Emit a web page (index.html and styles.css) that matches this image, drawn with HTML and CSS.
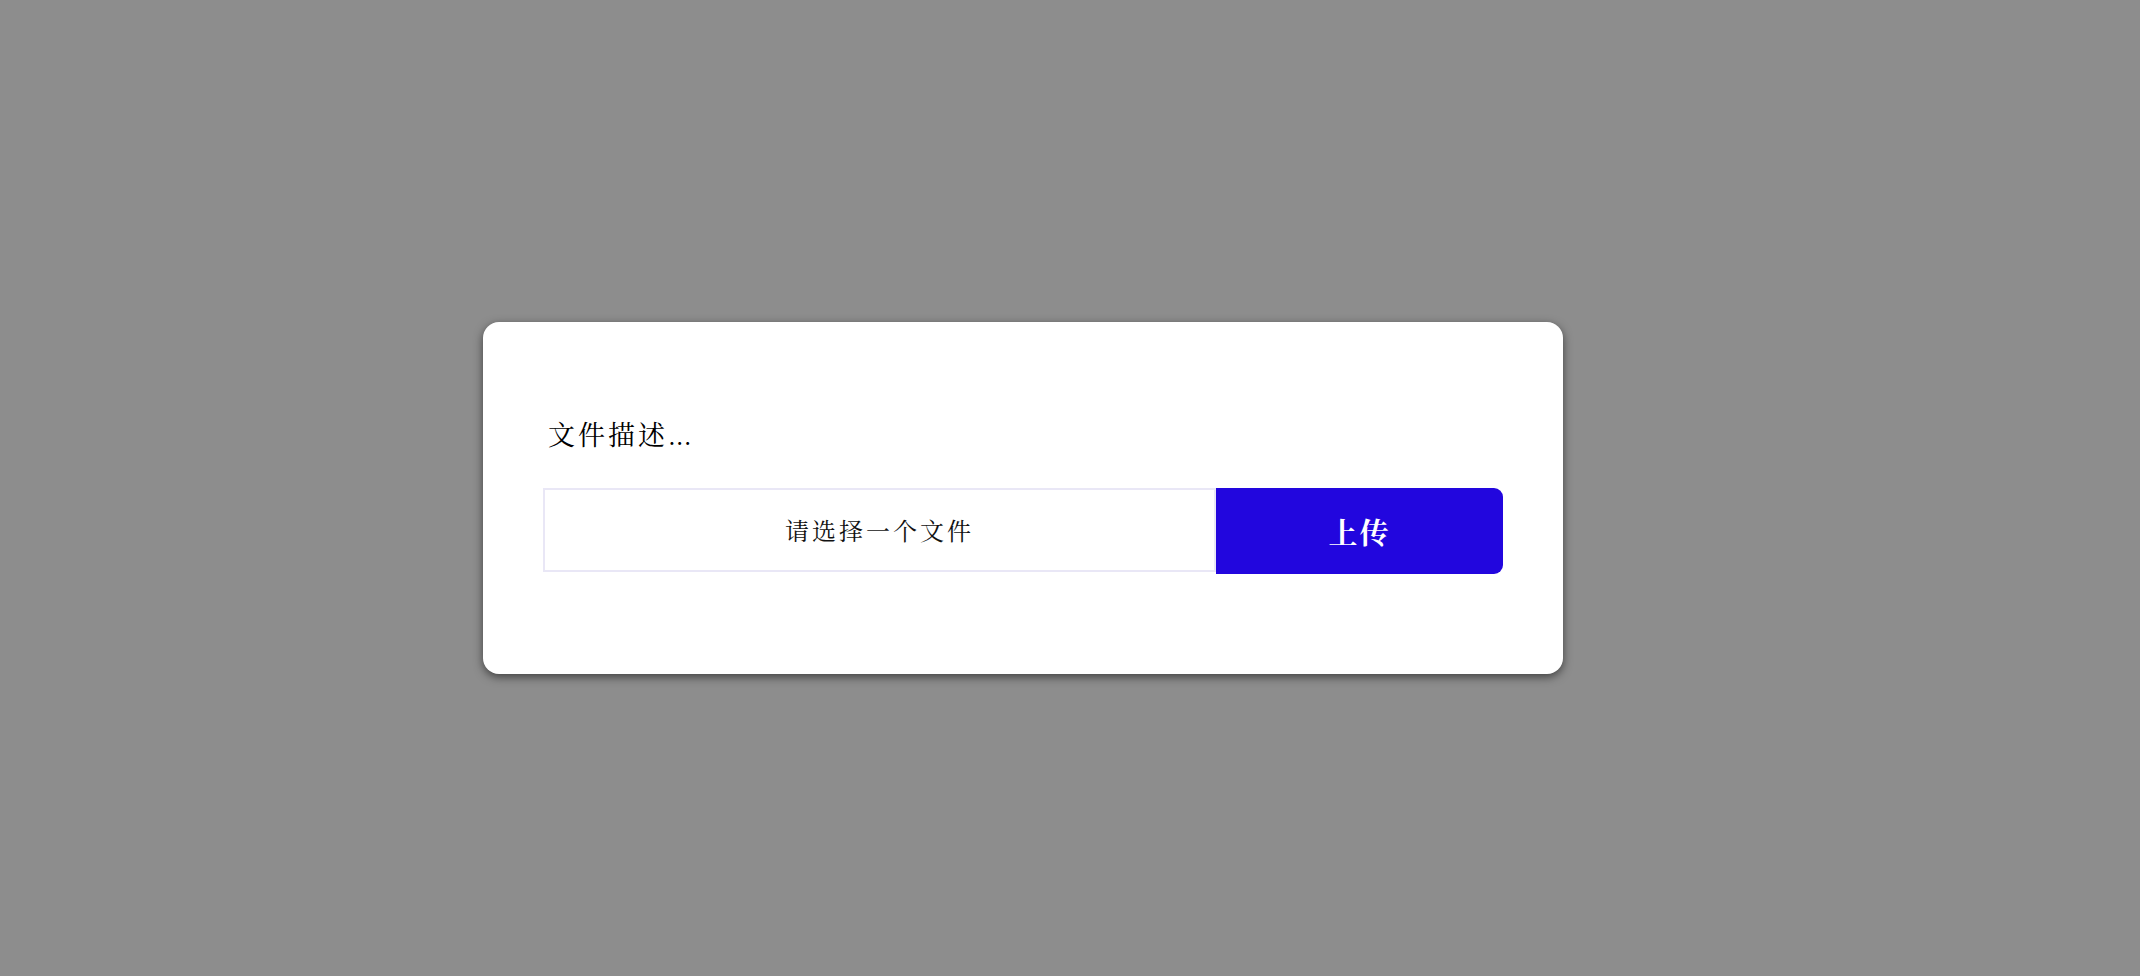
FILE: index.html
```html
<!DOCTYPE html>
<html lang="zh-CN">
<head>
<meta charset="utf-8">
<title>上传文件</title>
<link rel="stylesheet" href="styles.css">
</head>
<body>
<div class="stage">
  <form class="card">
    <div class="label">文件描述<span class="dots">...</span></div>
    <div class="row">
      <div class="file">请选择一个文件</div>
      <button type="button" class="upload">上传</button>
    </div>
  </form>
</div>
</body>
</html>
```

FILE: styles.css
```css
html, body {
  margin: 0;
  padding: 0;
  background: #8d8d8d;
}
body {
  font-family: "AR PL UKai CN", "KaiTi", "STKaiti", "Noto Serif CJK SC", "Noto Sans CJK SC", serif;
}
.stage {
  height: 976px;
  box-sizing: border-box;
  display: flex;
  justify-content: center;
  align-items: center;
  padding-right: 94px;
  padding-top: 20px;
}
.card {
  width: 1080px;
  height: 352px;
  box-sizing: border-box;
  padding: 94px 60px 100px;
  background: #fff;
  border-radius: 16px;
  box-shadow: 0 3px 10px rgba(0, 0, 0, 0.55);
  display: flex;
  flex-direction: column;
}
.label {
  font-size: 27px;
  line-height: 36px;
  height: 36px;
  letter-spacing: 3px;
  color: #000;
  padding-left: 5px;
  margin-bottom: 36px;
  flex: none;
}
.dots {
  letter-spacing: 0;
  font-size: 24px;
  line-height: 1;
}
.row {
  display: flex;
  align-items: flex-start;
  flex: none;
}
.file {
  width: 673px;
  height: 84px;
  box-sizing: border-box;
  border: 2px solid #e9e7f6;
  display: flex;
  align-items: center;
  justify-content: center;
  font-size: 24px;
  letter-spacing: 3px;
  color: #111;
  padding-bottom: 2px;
}
.upload {
  width: 287px;
  height: 86px;
  border: 0;
  margin: 0;
  padding: 0;
  background: #2206de;
  color: #fff;
  border-radius: 0 9px 9px 0;
  font-family: inherit;
  font-size: 29px;
  font-weight: bold;
  letter-spacing: 2px;
}
```
